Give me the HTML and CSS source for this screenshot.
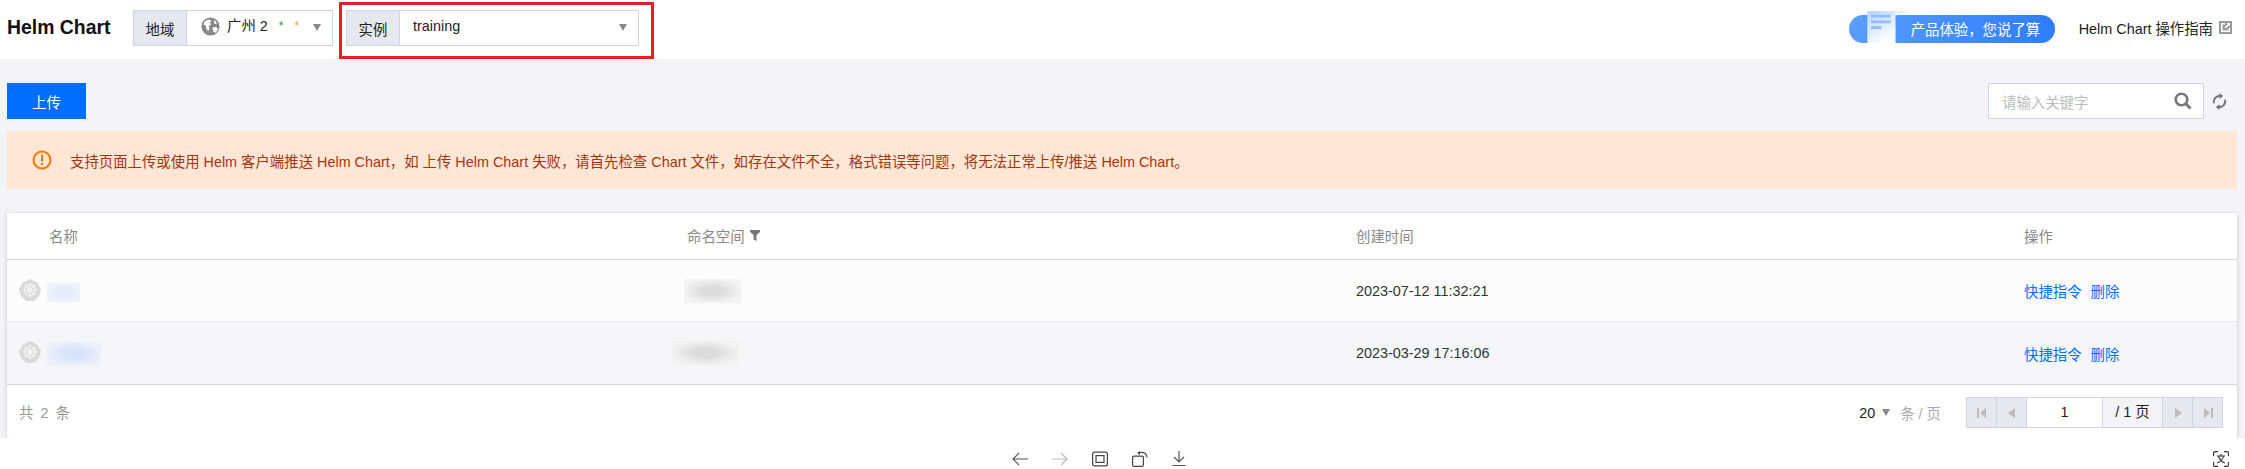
FILE: index.html
```html
<!DOCTYPE html>
<html lang="en">
<head>
  <meta charset="UTF-8" />
  <title>Helm Chart</title>
  <link rel="stylesheet" href="styles.css">
</head>
<body>

  <header class="topbar">
    <h1 class="title">Helm Chart</h1>

    <div class="select region-select">
      <span class="select-label">地域</span>
      <div class="select-value">
        <svg class="globe" viewBox="0 0 20 20"><circle cx="10" cy="10" r="9.5" fill="#888"/><path d="M4 4.5 8.5 2.5 11 4 9.5 6 10.5 8 8 10 9 12 7.5 15 5.5 12 5 9 2.5 7.5Z M12 11 16 10.5 18 12.5 15.5 16.5 13 15.5Z M13.5 3.5 16 5 16.5 7.5 14 7Z" fill="#fff"/></svg>
        <span>广州 2</span>
        <span class="star green">*</span>
        <span class="star orange">*</span>
        <i class="caret"></i>
      </div>
    </div>

    <div class="select instance-select">
      <span class="select-label">实例</span>
      <div class="select-value">
        <span class="instance-name">training</span>
        <i class="caret"></i>
      </div>
    </div>

    <div class="topbar-right">
      <a class="feedback">
        <svg class="feedback-doc" viewBox="0 0 44 34"><defs><linearGradient id="docfill" x1="0" y1="0" x2="0.6" y2="1"><stop offset="0" stop-color="#b4d3ff"/><stop offset="1" stop-color="#ffffff"/></linearGradient></defs><path d="M0 0H30V34H0Z" fill="url(#docfill)"/><path d="M30 0H38L44 0 30 5Z" fill="#e8f1ff"/><path d="M4 4H25V7H4ZM4 10H25V13H4ZM4 16H15V19H4Z" fill="#93bdfd"/></svg>
        <span>产品体验，您说了算</span>
      </a>
      <a class="guide">
        Helm Chart 操作指南
        <svg class="guide-icon" viewBox="0 0 13 13"><path d="M0 0H13V13H0Z" fill="#999"/><path d="M2 2H6V3.5H3.5V9.5H9.5V7H11V11H2Z M7.5 2H11V5.5L9.8 4.3 6.5 7.5 5.5 6.5 8.7 3.2Z" fill="#fff"/></svg>
      </a>
    </div>
  </header>

  <main class="content">
    <div class="toolbar">
      <button class="upload-btn">上传</button>
      <div class="toolbar-right">
        <div class="search">
          <span class="search-hint">请输入关键字</span>
          <svg class="search-icon" viewBox="0 0 18 18"><circle cx="7.5" cy="7.5" r="5.8" fill="none" stroke="#777" stroke-width="2.6"/><path d="M11.8 11.8 16.5 16.5" stroke="#777" stroke-width="3"/></svg>
        </div>
        <svg class="refresh-icon" viewBox="0 0 16 18"><path d="M2 11A6.5 6.5 0 0 1 8.5 3" fill="none" stroke="#777" stroke-width="2.2"/><path d="M8 0 12 3.2 8 6.2Z" fill="#777"/><path d="M14 7A6.5 6.5 0 0 1 7.5 15" fill="none" stroke="#777" stroke-width="2.2"/><path d="M8 12 4 14.8 8 18Z" fill="#777"/></svg>
      </div>
    </div>

    <div class="alert">
      <svg class="alert-icon" viewBox="0 0 20 20"><circle cx="10" cy="10" r="8.5" fill="none" stroke="#ff7800" stroke-width="2"/><path d="M9 4.5H11V11.5H9ZM9 13H11V15H9Z" fill="#ff7800"/></svg>
      <span>支持页面上传或使用 Helm 客户端推送 Helm Chart，如 上传 Helm Chart 失败，请首先检查 Chart 文件，如存在文件不全，格式错误等问题，将无法正常上传/推送 Helm Chart。</span>
    </div>

    <section class="table">
      <div class="row head">
        <div class="cell name-head">名称</div>
        <div class="cell">命名空间 <svg class="filter" viewBox="0 0 10 11"><path d="M0 0H10V2L6.5 5V11L3.5 9.500V5L0 2Z" fill="#777"/></svg></div>
        <div class="cell">创建时间</div>
        <div class="cell">操作</div>
      </div>

      <div class="row body-row odd">
        <div class="cell name-cell">
          <svg class="k8s" viewBox="0 0 22 22"><path d="M11 0 18 3.500 22 10 20 17 15 22H7L2 17 0 10 4 3.500Z" fill="#d9d9d9"/><g fill="none" stroke="#f5f5f5" stroke-width="1.200"><circle cx="11" cy="11" r="5.500"/><path d="M11 3.500V18.500M4 11H18M6 6 16 16M16 6 6 16"/></g></svg>
          <div class="blur-name short"></div>
        </div>
        <div class="cell"><div class="blur-ns first"></div></div>
        <div class="cell date">2023-07-12 11:32:21</div>
        <div class="cell links"><a>快捷指令</a><a>删除</a></div>
      </div>

      <div class="row body-row even">
        <div class="cell name-cell">
          <svg class="k8s" viewBox="0 0 22 22"><path d="M11 0 18 3.500 22 10 20 17 15 22H7L2 17 0 10 4 3.500Z" fill="#d9d9d9"/><g fill="none" stroke="#f5f5f5" stroke-width="1.200"><circle cx="11" cy="11" r="5.500"/><path d="M11 3.500V18.500M4 11H18M6 6 16 16M16 6 6 16"/></g></svg>
          <div class="blur-name long"></div>
        </div>
        <div class="cell"><div class="blur-ns second"></div></div>
        <div class="cell date">2023-03-29 17:16:06</div>
        <div class="cell links"><a>快捷指令</a><a>删除</a></div>
      </div>

      <div class="table-foot">
        <span class="total">共 2 条</span>
        <div class="page-size">
          <span class="size-num">20</span>
          <i class="caret"></i>
          <span class="size-unit">条 / 页</span>
        </div>
        <div class="pager">
          <span class="pg-btn first-btn"><svg viewBox="0 0 10 12"><path d="M0 1H2V11H0ZM9 1V11L3 6Z" fill="#bbb"/></svg></span>
          <span class="pg-btn"><svg viewBox="0 0 10 12"><path d="M8 1V11L1 6Z" fill="#bbb"/></svg></span>
          <span class="pg-input">1</span>
          <span class="pg-total">/ 1 页</span>
          <span class="pg-btn"><svg viewBox="0 0 10 12"><path d="M2 1V11L9 6Z" fill="#bbb"/></svg></span>
          <span class="pg-btn last-btn"><svg viewBox="0 0 10 12"><path d="M1 1V11L7 6ZM8 1H10V11H8Z" fill="#bbb"/></svg></span>
        </div>
      </div>
    </section>
  </main>

  <footer class="viewer-bar">
    <div class="viewer-tools">
      <svg viewBox="0 0 16 16"><path d="M16 8H1M7 2 1 8 7 14" fill="none" stroke="#555" stroke-width="1.200"/></svg>
      <svg viewBox="0 0 16 16"><path d="M0 8H15M9 2 15 8 9 14" fill="none" stroke="#bbb" stroke-width="1.200"/></svg>
      <svg viewBox="0 0 16 16"><rect x="0.600" y="1.100" width="14.800" height="13.800" rx="2" fill="none" stroke="#444" stroke-width="1.200"/><rect x="4" y="4.600" width="8" height="6.800" fill="none" stroke="#444" stroke-width="1.200"/></svg>
      <svg viewBox="0 0 16 16"><rect x="0.600" y="5.100" width="10.800" height="10.300" rx="1.500" fill="none" stroke="#444" stroke-width="1.200"/><path d="M8 1.500C12 1 15 2.500 15 6.500" fill="none" stroke="#444" stroke-width="1.200"/><path d="M8 0V4L5 2Z" fill="#444"/></svg>
      <svg viewBox="0 0 16 16"><path d="M7 0V11M2 6 7 11 12 6M0.500 14.500H13.500" fill="none" stroke="#555" stroke-width="1.200"/></svg>
    </div>
    <svg class="ocr-icon" viewBox="0 0 16 16"><path d="M5 .6H2Q.6 .6 .6 2V5M11 .6H14Q15.400 .6 15.400 2V5M5 15.400H2Q.6 15.400 .6 14V11M11 15.400H14Q15.400 15.400 15.400 14V11M4 5H12M8 3V5M10.500 5C10 8.500 7 11 4 12M5.500 5C6.500 8.500 9 11 12 12" fill="none" stroke="#333" stroke-width="1.100"/></svg>
  </footer>

  <!-- red annotation drawn on top of the screenshot -->
  <div class="annotation"></div>

</body>
</html>
```

FILE: styles.css
```css
html, body {
  height: 100%;
}

body {
  margin: 0;
  overflow: hidden;
  background-color: white;
  color: #222;
  font-family: "Liberation Sans", "Noto Sans CJK SC", sans-serif;
  font-size: 14.4px;
}

svg {
  display: block;
  flex: none;
}

/* Top bar */
.topbar {
  display: flex;
  align-items: flex-start;
  height: 59px;
  padding: 10px 13px 0 7px;
  box-sizing: border-box;
  background-color: white;
}

.title {
  width: 126px;
  margin: 0;
  font-size: 19.4px;
  line-height: 34px;
  color: #111;
}

.select {
  display: flex;
  height: 36px;
  box-sizing: border-box;
  border: 1px solid #cfd5de;
  line-height: 34px;
}

.region-select {
  width: 200px;
  margin-right: 13px;
}

.instance-select {
  width: 293px;
}

.select-label {
  width: 53px;
  flex: none;
  text-align: center;
  background-color: #e5e8ee;
  border-right: 1px solid #cfd5de;
  box-sizing: border-box;
  padding-top: 2px;
}

.select-value {
  display: flex;
  align-items: center;
  flex: 1;
  position: relative;
  padding-bottom: 4px;
}

.globe {
  width: 19px;
  height: 19px;
  margin: 0 7px 0 14px;
}

.star {
  font-size: 12px;
  margin-left: 11px;
}

.star.green {
  color: #4e8a2b;
}

.star.orange {
  color: #f0a040;
}

.instance-name {
  margin-left: 13px;
}

.caret {
  display: block;
  width: 0;
  height: 0;
  border-left: 4.500px solid transparent;
  border-right: 4.500px solid transparent;
  border-top: 7px solid #888;
}

.select-value .caret {
  margin-left: auto;
  margin-right: 11px;
  margin-top: 2px;
}

.topbar-right {
  display: flex;
  align-items: center;
  margin-left: auto;
  height: 32px;
  margin-top: 1px;
}

.feedback {
  display: flex;
  align-items: center;
  position: relative;
  width: 206px;
  height: 28px;
  margin: 3px 24px 0 0;
  padding-left: 62px;
  box-sizing: border-box;
  border-radius: 14px;
  background: linear-gradient(90deg, #5b9dff, #2d7dff);
  color: white;
}

.feedback-doc {
  position: absolute;
  left: 17px;
  bottom: 0;
  width: 44px;
  height: 32px;
}

.guide {
  display: flex;
  align-items: center;
  gap: 6px;
  color: #222;
}

.guide-icon {
  width: 13px;
  height: 13px;
}

/* Page content */
.content {
  height: 379px;
  padding: 24px 8px 0 7px;
  box-sizing: border-box;
  background-color: #f2f4f8;
  overflow: hidden;
}

.toolbar {
  display: flex;
  justify-content: space-between;
  height: 36px;
  margin-bottom: 12px;
}

.upload-btn {
  width: 79px;
  height: 36px;
  padding: 0;
  border: none;
  background-color: #006eff;
  color: white;
  font-family: inherit;
  font-size: 14.4px;
}

.toolbar-right {
  display: flex;
  align-items: center;
  gap: 8px;
  padding-right: 10px;
}

.search {
  display: flex;
  align-items: center;
  justify-content: space-between;
  width: 216px;
  height: 36px;
  padding: 0 11px 0 13px;
  box-sizing: border-box;
  border: 1px solid #cfd5de;
  background-color: white;
  color: #bbb;
}

.search-icon {
  width: 18px;
  height: 18px;
}

.refresh-icon {
  width: 15px;
  height: 17px;
}

.alert {
  display: flex;
  align-items: center;
  height: 58px;
  padding-left: 25px;
  margin-bottom: 24px;
  background-color: #ffe6d5;
  color: #a8340f;
}

.alert-icon {
  width: 20px;
  height: 20px;
  margin-right: 18px;
}

/* Table */
.table {
  height: 240px;
  background-color: white;
  box-shadow: 0 1px 4px rgba(54, 58, 80, 0.25);
}

.row {
  display: grid;
  grid-template-columns: 668px 669px 668px 225px;
  box-sizing: border-box;
}

.cell {
  display: flex;
  align-items: center;
  gap: 5px;
  padding-left: 12px;
}

.head {
  height: 47px;
  padding-bottom: 2px;
  border-bottom: 1px solid #cfd5de;
  color: #888;
}

.name-head {
  padding-left: 42px;
}

.filter {
  width: 10px;
  height: 11px;
}

.body-row {
  border-bottom: 1px solid #e3e6eb;
}

.odd {
  height: 62px;
  background-color: #fcfcfd;
}

.even {
  height: 63px;
  background-color: #f5f6f9;
  border-bottom-color: #cfd5de;
}

.name-cell {
  gap: 6px;
}

.k8s {
  width: 22px;
  height: 22px;
  margin-top: -2px;
}

/* redacted text in the source image */
.blur-name.short {
  width: 33px;
  height: 19px;
  margin-top: 3px;
  background: radial-gradient(closest-side, #e4ecfc 40%, #eef2fc);
}

.blur-name.long {
  width: 54px;
  height: 24px;
  margin-top: 1px;
  background: radial-gradient(closest-side, #d5e3fa 30%, #ebf0fb);
}

.blur-ns {
  height: 24px;
  background: radial-gradient(closest-side, #dcdcdc 35%, #f2f2f3);
}

.blur-ns.first {
  width: 57px;
  margin: 0 0 0 -3px;
}

.blur-ns.second {
  width: 67px;
  margin: 0 0 0 -15px;
}

.date {
  color: #333;
}

.links {
  gap: 9px;
}

.links a {
  color: #006eff;
}

.table-foot {
  display: flex;
  align-items: flex-start;
  height: 54px;
  padding: 12px 14px 0 12px;
  box-sizing: border-box;
}

.total {
  margin-top: 4px;
  color: #999;
  word-spacing: 3px;
}

.page-size {
  display: flex;
  align-items: center;
  height: 31px;
  margin-left: auto;
  margin-right: 25px;
}

.size-num {
  margin-right: 7px;
}

.size-unit {
  margin-left: 10px;
  color: #aaa;
}

.pager {
  display: flex;
  height: 31px;
  box-sizing: border-box;
  border: 1px solid #cfd5de;
  line-height: 29px;
}

.pg-btn {
  display: flex;
  align-items: center;
  justify-content: center;
  width: 29px;
  background-color: #e5e8ee;
  border-right: 1px solid #cfd5de;
}

.pg-btn.last-btn {
  border-right: none;
}

.pg-btn svg {
  width: 10px;
  height: 12px;
}

.pg-input {
  width: 76px;
  box-sizing: border-box;
  text-align: center;
  background-color: white;
  border-right: 1px solid #cfd5de;
}

.pg-total {
  width: 60px;
  box-sizing: border-box;
  text-align: center;
  background-color: #f2f4f8;
  border-right: 1px solid #cfd5de;
}

/* Image viewer bar */
.viewer-bar {
  display: flex;
  align-items: center;
  height: 31px;
  padding: 10px 16px 0 0;
  box-sizing: border-box;
  background-color: white;
}

.viewer-tools {
  display: flex;
  gap: 24px;
  margin-left: 1012px;
}

.viewer-tools svg,
.ocr-icon {
  width: 16px;
  height: 16px;
}

.ocr-icon {
  margin-left: auto;
}

.annotation {
  position: absolute;
  left: 339px;
  top: 2px;
  width: 315px;
  height: 57px;
  box-sizing: border-box;
  border: 3px solid #ed1c24;
  pointer-events: none;
}
```
